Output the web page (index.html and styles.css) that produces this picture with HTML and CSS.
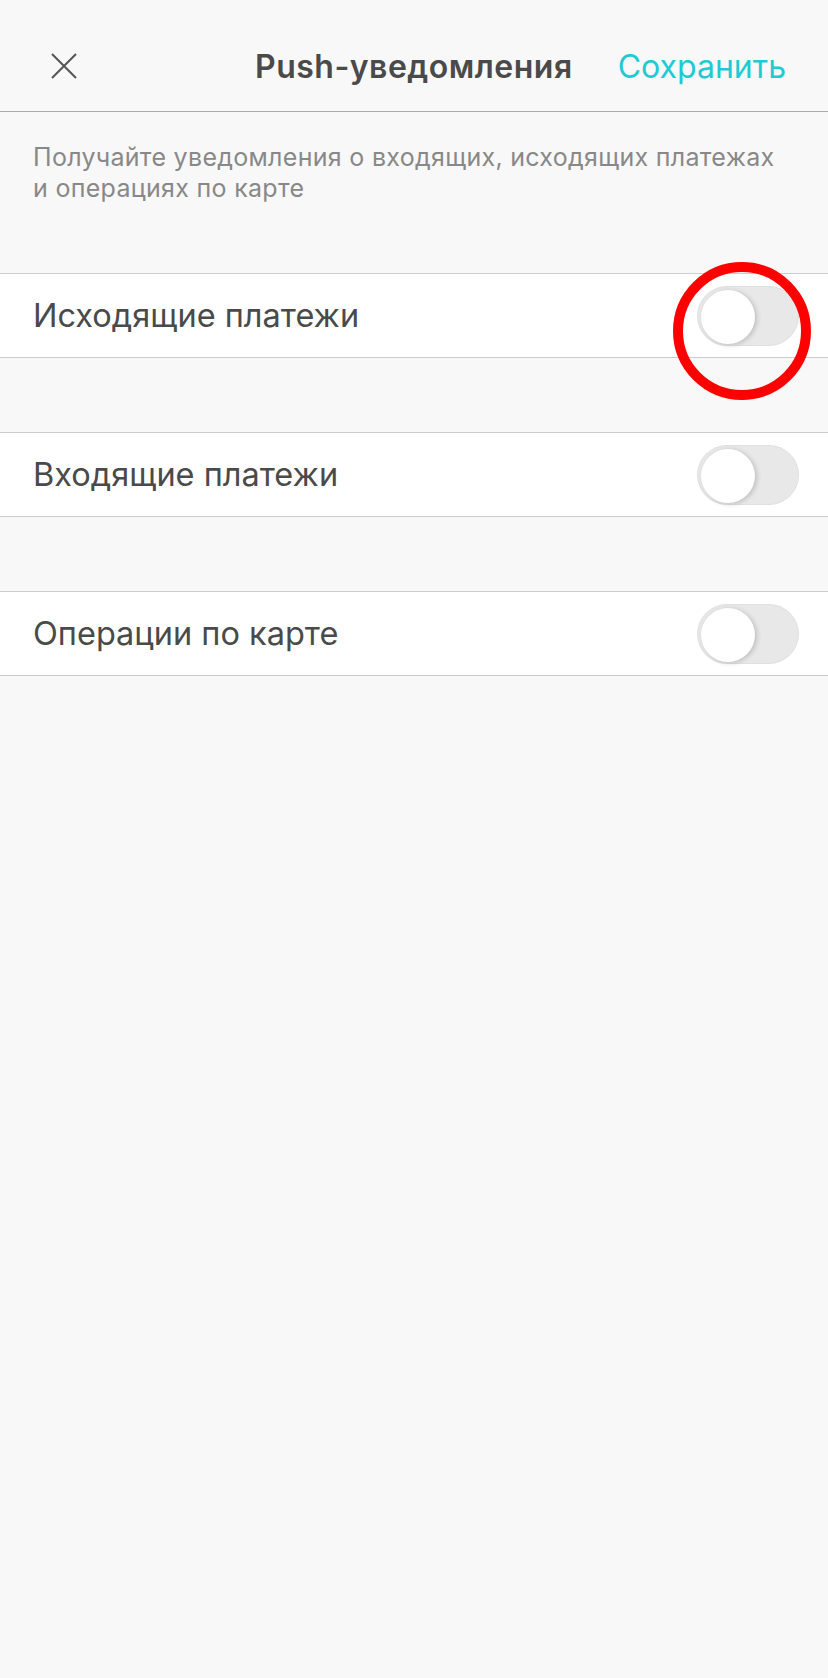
FILE: index.html
```
<!DOCTYPE html><html><head><meta charset="utf-8"/>
<meta name="viewport" content="width=device-width, initial-scale=1.0">
<title>Push-уведомления</title>
<link rel="stylesheet" href="styles.css">
</head>
<body>

<div class="header">
	<div class="close">
		<svg width="26" height="26" viewBox="0 0 26 26"><path d="M1 1 L25 25 M25 1 L1 25" stroke="#555" stroke-width="2" fill="none"/></svg>
	</div>
	<div class="title">Push-уведомления</div>
	<div class="save">Сохранить</div>
</div>

<div class="desc">Получайте уведомления о входящих, исходящих платежах<br>и операциях по карте</div>

<div class="list">
	<div class="row">
		<div class="label">Исходящие платежи</div>
		<div class="switch"><div class="knob"></div><div class="mark"></div></div>
	</div>
	<div class="row">
		<div class="label">Входящие платежи</div>
		<div class="switch"><div class="knob"></div></div>
	</div>
	<div class="row">
		<div class="label">Операции по карте</div>
		<div class="switch"><div class="knob"></div></div>
	</div>
</div>

</body>
</html>
```
FILE: styles.css
```
body {
	margin: 0;
	background-color: #f8f8f8;
	font-family: Inter, Roboto, "Liberation Sans", sans-serif;
	color: #4a4a4a;
}
/* header */
.header {
	display: flex;
	align-items: center;
	height: 112px;
	box-sizing: border-box;
	border-bottom: 1px solid #aaa;
	padding: 22px 42px 0 51px;
}
.close {
	width: 26px;
	height: 26px;
	margin-top: -2px;
}
.close svg {
	display: block;
}
.title {
	flex: 1;
	text-align: right;
	font-size: 32px;
	font-weight: 600;
	letter-spacing: .5px;
	color: #4a4a4a;
	margin-right: 45px;
}
.save {
	font-size: 32px;
	color: #1ecad3;
}
/* description */
.desc {
	padding: 30px 33px 0 33px;
	font-size: 25px;
	letter-spacing: .3px;
	line-height: 31px;
	color: #888;
	height: 131px;
}
/* list */
.row {
	display: flex;
	align-items: center;
	justify-content: space-between;
	height: 85px;
	box-sizing: border-box;
	background-color: white;
	border-top: 1px solid #ccc;
	border-bottom: 1px solid #ccc;
	padding: 0 29px 0 33px;
	margin-bottom: 74px;
}
.label {
	font-size: 32.5px;
}
.switch {
	position: relative;
	width: 102px;
	height: 60px;
	border-radius: 30px;
	background-color: #e8e8e8;
	box-sizing: border-box;
	border: 1px solid #e0e0e0;
}
.knob {
	position: absolute;
	left: 3px;
	top: 3px;
	width: 54px;
	height: 54px;
	border-radius: 50%;
	background-color: white;
	box-shadow: 2px 1px 5px rgba(0, 0, 0, .18);
}
.mark {
	position: absolute;
	left: -25px;
	top: -25px;
	width: 118px;
	height: 118px;
	border: 10px solid #f00;
	border-radius: 50%;
}
```
